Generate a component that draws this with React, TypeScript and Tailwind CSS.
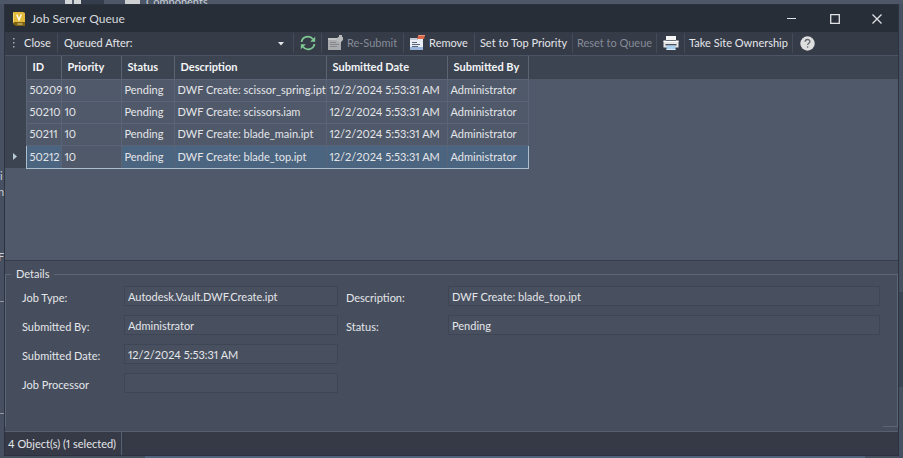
import type { ReactNode } from 'react'
import clsx from 'clsx'

const jobs = [
  { id: '50209', description: 'DWF Create: scissor_spring.ipt' },
  { id: '50210', description: 'DWF Create: scissors.iam' },
  { id: '50211', description: 'DWF Create: blade_main.ipt' },
  { id: '50212', description: 'DWF Create: blade_top.ipt' },
]

const selectedId = '50212'

function VaultLogo() {
  return (
    <svg width="14" height="16" viewBox="0 0 14 16">
      <path d="M2 1h9l2 1v10H1V2z" fill="#e3b93c" />
      <path d="M1 2l1-1v10l-1 2z" fill="#f3d56a" />
      <path d="M2 11h11v4H4l-3-2z" fill="#7d6212" />
      <path d="M5.5 13h5" stroke="#e8d9a0" strokeWidth="1" />
      <path d="M4.7 3.5L7 8.8l2.3-5.3" fill="none" stroke="#fffbe6" strokeWidth="1.5" />
    </svg>
  )
}

function RefreshIcon() {
  return (
    <svg width="16" height="16" viewBox="0 0 16 16" fill="none" stroke="#7fca94" strokeWidth="1.8">
      <path d="M1.6 7A6.3 6 0 0 1 13 4.2" />
      <path d="M14.4 9A6.3 6 0 0 1 3 11.8" />
      <path d="M15.2 1.8v5h-5z" fill="#7fca94" stroke="none" />
      <path d="M.8 14.2v-5h5z" fill="#7fca94" stroke="none" />
    </svg>
  )
}

function ResubmitIcon() {
  return (
    <svg width="15" height="16" viewBox="0 0 15 16">
      <path d="M0 3h13v12H0z" fill="#a9abae" />
      <path d="M0 3h13v2H0z" fill="#c3c4c6" />
      <path d="M2 7.5h6M2 9.5h9M2 11.5h7" stroke="#85888e" />
      <path d="M8 5l2-3h1V0h3v2h1v3l-3 3z" fill="#b9babc" />
    </svg>
  )
}

function RemoveIcon() {
  return (
    <svg width="15" height="16" viewBox="0 0 15 16">
      <path d="M0 3h13v12H0z" fill="#e9eef6" />
      <path d="M0 12h13v3H0z" fill="#9bb6dc" />
      <path d="M0 3h8v2H0z" fill="#c4cad6" />
      <path d="M2 7.5h5M2 9.5h8M2 11.5h6" stroke="#5d6678" />
      <path d="M8.500 0H15l-1 4H7z" fill="#d9694a" />
      <path d="M8.500 0H15v1H8.200z" fill="#ee9678" />
    </svg>
  )
}

function PrinterIcon() {
  return (
    <svg width="16" height="16" viewBox="0 0 16 16">
      <path d="M3 1h10v4H3z" fill="#f4f4f4" />
      <path d="M.5 6h15v6.500H.5z" fill="#e6e6e6" />
      <path d="M.5 5.500h15v1.500H.5z" fill="#fff" />
      <path d="M3 5h10v1H3z" fill="#686d77" />
      <path d="M2.500 9h11v1.500h-11z" fill="#4a505c" />
      <path d="M3.500 10.500h9V15h-9z" fill="#a8d0ee" />
      <path d="M3.500 14h9v1h-9z" fill="#dceaf5" />
    </svg>
  )
}

function HelpIcon() {
  return (
    <svg width="15" height="15" viewBox="0 0 15 15">
      <circle cx="7.500" cy="7.500" r="7.200" fill="#dedede" />
      <path d="M5.200 5.800c0-3.100 4.700-2.900 4.700-.3 0 1.700-2.300 1.700-2.300 3.500" fill="none" stroke="#666a72" strokeWidth="1.400" />
      <path d="M6.900 10.300h1.400v1.400H6.900z" fill="#666a72" />
    </svg>
  )
}

function ToolButton({ className, label, disabled, children }: { className: string; label?: string; disabled?: boolean; children: ReactNode }) {
  return (
    <button
      type="button"
      aria-label={label}
      disabled={disabled}
      className={clsx('flex h-5 shrink-0 items-center justify-center gap-1 border-r border-[#444b5a] whitespace-nowrap', disabled && 'text-[#858b97]', className)}
    >
      {children}
    </button>
  )
}

function Field({ id, label, value, wide }: { id: string; label: string; value: string; wide?: boolean }) {
  return (
    <div className={clsx('flex h-5 items-end', wide && 'flex-1')}>
      <label htmlFor={id} className="w-[102px] shrink-0">{label}</label>
      <input
        id={id}
        readOnly
        value={value}
        className={clsx('h-5 border border-[#3e4655] bg-[#485060] px-[3px] leading-4 outline-none', wide ? 'min-w-0 flex-1' : 'w-[214px]')}
      />
    </div>
  )
}

// the main Vault window that shows round the edges of the dialog
function Backdrop() {
  return (
    <div aria-hidden="true" className="absolute inset-0 overflow-hidden text-[11px] text-[#c9ced6]">
      <div className="absolute inset-x-0 top-0 h-1 bg-[#4d5768]" />
      <div className="absolute top-0 left-[65px] h-1 w-[16px] bg-[#d5d6d8]" />
      <div className="absolute top-0 left-[72px] h-1 w-[2px] bg-[#596170]" />
      <div className="absolute top-0 left-[81px] h-1 w-[23px] bg-[#343d4b]" />
      <div className="absolute top-0 left-[125px] h-1 w-[15px] bg-[#cfd0d2]" />
      <span className="absolute top-[-6px] left-[146px] leading-4">Components</span>
      <span className="absolute top-[168px] left-0 leading-4">i</span>
      <span className="absolute top-[184px] left-[-2px] leading-4">n</span>
      <span className="absolute top-[249px] left-[-2px] leading-4">F</span>
      <div className="absolute top-[301px] left-0 h-px w-1 bg-[#9098a4]" />
      <div className="absolute top-[413px] left-0 h-px w-1 bg-[#9098a4]" />
      <div className="absolute top-[292px] right-0 h-[95px] w-1 bg-[#3a4453]" />
      <div className="absolute right-[38px] bottom-0 left-[145px] h-1 bg-[#50647d]" />
    </div>
  )
}

export default function App() {
  return (
    <div className="relative flex min-h-screen flex-col bg-[#465061] px-1 pt-1 pb-[2px] font-[Lato,sans-serif] text-[11px] leading-4 text-[#e4e6e9] proportional-nums">
      <Backdrop />
      <main className="relative flex flex-1 flex-col border border-[#2b3341] bg-[#464e5d]">
        <header className="flex h-[27px] items-center bg-[#272e38] pl-[7px]">
          <VaultLogo />
          <h1 className="ml-[5px] flex-1 text-[12px] text-[#d5d8dc]">Job Server Queue</h1>
          <button type="button" aria-label="Minimize" className="flex h-7 w-[43px] items-center justify-center">
            <svg width="9" height="9" viewBox="0 0 9 9"><path d="M0 4.500h9" stroke="#e0e2e5" /></svg>
          </button>
          <button type="button" aria-label="Maximize" className="flex h-7 w-[43px] items-center justify-center">
            <svg width="10" height="10" viewBox="0 0 10 10"><path d="M.7.7h8.600v8.600H.7z" fill="none" stroke="#e0e2e5" strokeWidth="1.300" /></svg>
          </button>
          <button type="button" aria-label="Close window" className="flex h-7 w-[42px] items-center justify-center">
            <svg width="10" height="10" viewBox="0 0 10 10"><path d="M.5.5l9 9M9.500.5l-9 9" stroke="#e0e2e5" strokeWidth="1.300" /></svg>
          </button>
        </header>

        <div role="toolbar" className="flex h-6 items-start overflow-hidden border-b border-[#4b5464] bg-[#363b48] pt-px">
          <svg width="13" height="20" viewBox="0 0 13 20" className="shrink-0" fill="#a4a9b2">
            <path d="M8 5h1.500v1.500H8zM8 9h1.500v1.500H8zM8 13h1.500v1.500H8z" />
          </svg>
          <ToolButton className="w-10">Close</ToolButton>
          <div className="relative flex h-5 w-[236px] shrink-0 items-center border-r border-[#444b5a] pl-[6px]">
            <label htmlFor="queued-after">Queued After:</label>
            <select id="queued-after" className="h-5 min-w-0 flex-1 appearance-none bg-transparent outline-none" />
            <svg width="6" height="4" viewBox="0 0 6 4" className="pointer-events-none absolute top-[9px] right-[9px]"><path d="M0 0h6L3 3.500z" fill="#e4e6e9" /></svg>
          </div>
          <ToolButton className="w-7" label="Refresh"><RefreshIcon /></ToolButton>
          <ToolButton className="w-[82px]" disabled><ResubmitIcon />Re-Submit</ToolButton>
          <ToolButton className="w-[71px]"><RemoveIcon />Remove</ToolButton>
          <ToolButton className="w-[98px]">Set to Top Priority</ToolButton>
          <ToolButton className="w-[84px]" disabled>Reset to Queue</ToolButton>
          <ToolButton className="w-7" label="Print"><PrinterIcon /></ToolButton>
          <ToolButton className="w-[108px]">Take Site Ownership</ToolButton>
          <ToolButton className="w-7 border-r-0" label="Help"><HelpIcon /></ToolButton>
        </div>

        <section className="flex-1 border-b border-[#363e4c] bg-[#50596a]">
          <div className="bg-linear-to-b from-[#3c4451] from-[23px] to-transparent to-[23px]">
            <table className="w-[523px] table-fixed border-collapse text-left">
              <colgroup>
                <col className="w-[21px]" />
                <col className="w-[35px]" />
                <col className="w-[60px]" />
                <col className="w-[53px]" />
                <col className="w-[152px]" />
                <col className="w-[121px]" />
                <col className="w-[81px]" />
              </colgroup>
              <thead>
                <tr className="h-[23px] whitespace-nowrap text-[#f4f5f6]">
                  <th aria-label="Current row" className="border-r border-[#5a6475] p-0" />
                  {['ID', 'Priority', 'Status', 'Description', 'Submitted Date', 'Submitted By'].map(name => (
                    <th key={name} className="border-r border-[#5a6475] py-0 pr-0 pl-[6px] font-bold">{name}</th>
                  ))}
                </tr>
              </thead>
              <tbody>
                {jobs.map(job => {
                  const selected = job.id === selectedId
                  const plain = clsx('border border-[#596476] py-0 pr-0 pl-[3px]', selected && 'border-y-[#a9bfce]')
                  const cell = clsx(plain, selected && 'bg-[#4b647f]')
                  return (
                    <tr key={job.id} aria-selected={selected} className={clsx('whitespace-nowrap', selected ? 'h-[23px]' : 'h-[22px]')}>
                      <td className="bg-[#3c4451] p-0">
                        {selected && <svg width="4" height="7" viewBox="0 0 4 7" className="ml-2"><path d="M0 0l4 3.500L0 7z" fill="#b9c9d4" /></svg>}
                      </td>
                      <td className={clsx(cell, selected && 'border-l-[#a9bfce]')}>{job.id}</td>
                      <td className={plain}>10</td>
                      <td className={cell}>Pending</td>
                      <td className={cell}>{job.description}</td>
                      <td className={cell}>12/2/2024 5:53:31 AM</td>
                      <td className={clsx(cell, selected && 'border-r-[#a9bfce]')}>Administrator</td>
                    </tr>
                  )
                })}
              </tbody>
            </table>
          </div>
        </section>

        <fieldset className="mt-[5px] mb-1 flex flex-col border border-b-0 border-[#5d6676] pl-[5px]">
          <legend className="px-[5px]">Details</legend>
          <div className="mt-1 mr-[17px] ml-[11px] flex gap-2">
            <div className="flex flex-col gap-[9px]">
              <Field id="job-type" label="Job Type:" value="Autodesk.Vault.DWF.Create.ipt" />
              <Field id="submitted-by" label="Submitted By:" value="Administrator" />
              <Field id="submitted-date" label="Submitted Date:" value="12/2/2024 5:53:31 AM" />
              <Field id="job-processor" label="Job Processor" value="" />
            </div>
            <div className="flex flex-1 flex-col gap-[9px]">
              <div className="flex"><Field id="description" label="Description:" value="DWF Create: blade_top.ipt" wide /></div>
              <div className="flex"><Field id="status" label="Status:" value="Pending" wide /></div>
            </div>
          </div>
          <div className="mt-[33px] h-px w-[14px] self-end bg-[#5d6676]" />
        </fieldset>

        <footer className="flex h-6 items-center border-t border-[#566071] bg-[#363a46]">
          <span className="flex h-full items-center border-r border-[#566071] pr-[5px] pl-[3px]">4 Object(s) (1 selected)</span>
        </footer>
      </main>
    </div>
  )
}
